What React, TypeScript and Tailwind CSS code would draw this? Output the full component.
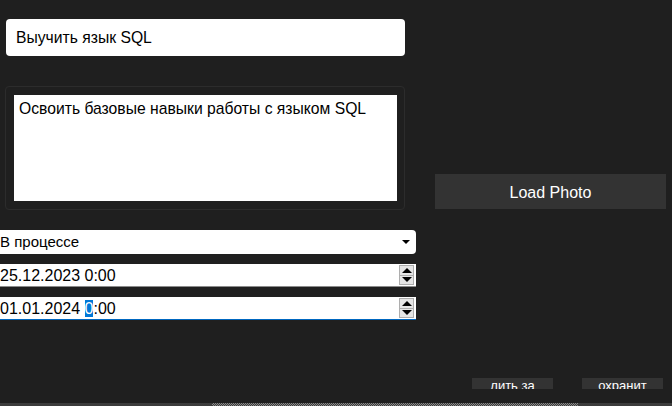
function Spin() {
  return (
    <div className="flex flex-col w-[15px] h-[20px] border border-[#adadad] bg-[#e5e5e5] mr-[2px] self-center">
      <div className="flex-1 flex items-center justify-center border-b border-[#adadad]">
        <div className="w-0 h-0 border-l-[5px] border-r-[5px] border-b-[5px] border-l-transparent border-r-transparent border-b-black" />
      </div>
      <div className="flex-1 flex items-center justify-center">
        <div className="w-0 h-0 border-l-[5px] border-r-[5px] border-t-[5px] border-l-transparent border-r-transparent border-t-black" />
      </div>
    </div>
  );
}

export default function App() {
  const font = { fontFamily: '"Liberation Sans", Arial, sans-serif' };
  return (
    <div
      className="w-[672px] h-[406px] bg-[#1f1f1f] flex flex-col overflow-hidden text-black"
      style={font}
    >
      <div className="flex">
        <div className="w-[416px] flex flex-col pt-[19px]">
          <div className="ml-[6px] w-[399px] h-[37px] bg-white rounded-[4px] flex items-center pl-[10px] text-[15.7px]">
            Выучить язык SQL
          </div>
          <div className="mt-[30px] ml-[5px] w-[400px] h-[124px] border border-[#2c2c2c] rounded-[4px] p-[8px]">
            <div className="bg-white w-[383px] h-[106px] pl-[5px] pt-[4px] text-[15.7px] leading-[20px]">
              Освоить базовые навыки работы с языком SQL
            </div>
          </div>
          <div className="mt-[20px] h-[24px] bg-white rounded-r-[4px] flex items-center text-[15px]">
            <span className="flex-1">В процессе</span>
            <div className="mr-[6px] w-0 h-0 border-l-[4px] border-r-[4px] border-t-[4px] border-l-transparent border-r-transparent border-t-black" />
          </div>
          <div className="mt-[10px] h-[23px] bg-white border-b border-[#8a8a8a] flex items-center text-[16px]">
            <span className="flex-1 pt-[1px]">25.12.2023 0:00</span>
            <Spin />
          </div>
          <div className="mt-[10px] h-[23px] bg-white border-b border-[#0067c0] flex items-center text-[16px]">
            <span className="flex-1 pt-[1px]">
              01.01.2024 <span className="bg-[#0078d7] text-white">0</span>:00
            </span>
            <Spin />
          </div>
        </div>
        <div className="flex-1 pt-[174px] pl-[19px] pr-[6px]">
          <div className="h-[35px] bg-[#333333] text-white flex items-center justify-center pt-[2px] text-[16px]">
            Load Photo
          </div>
        </div>
      </div>
      <div className="mt-auto flex justify-end gap-[29px] pr-[9px] mb-[14px]">
        <div className="w-[81px] h-[11px] bg-[#333333] text-white text-[13px] leading-[13px] overflow-hidden flex justify-center">
          <span className="mt-[1px] whitespace-nowrap">лить за</span>
        </div>
        <div className="w-[81px] h-[11px] bg-[#333333] text-white text-[13px] leading-[13px] overflow-hidden flex justify-center">
          <span className="mt-[1px] whitespace-nowrap">охранит</span>
        </div>
      </div>
      <div className="h-[3px] flex">
        <div className="w-[212px] bg-[#3c3c3c]" />
        <div className="w-[366px] bg-[repeating-conic-gradient(#8a8a8a_0_25%,#3a3a3a_0_50%)] bg-[length:2px_2px]" />
        <div className="flex-1 bg-[#3c3c3c]" />
      </div>
    </div>
  );
}
